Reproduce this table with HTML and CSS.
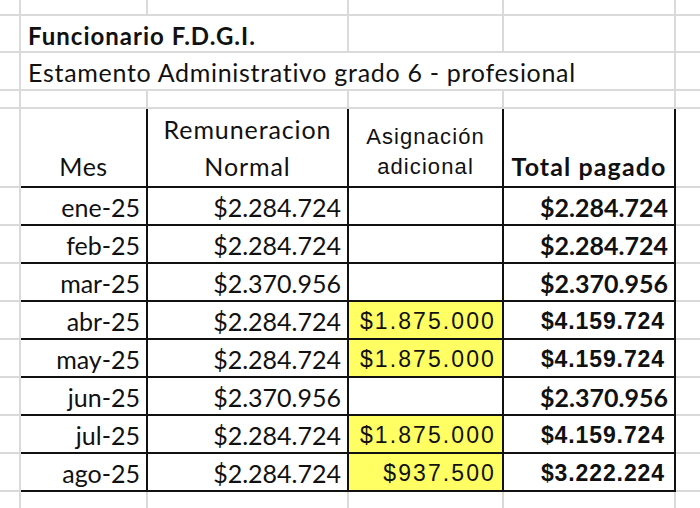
FILE: index.html
```html
<!DOCTYPE html>
<html lang="es">
<head>
<meta charset="utf-8">
<title>Funcionario F.D.G.I.</title>
<link rel="stylesheet" href="styles.css">
</head>
<body>
<table class="sheet">
  <colgroup>
    <col class="c0"><col class="c1"><col class="c2"><col class="c3"><col class="c4"><col class="c5">
  </colgroup>
  <tr class="r-top"><td></td><td></td><td></td><td></td><td></td><td></td></tr>
  <tr class="r-title"><td></td><td colspan="2" class="title">Funcionario F.D.G.I.</td><td></td><td></td><td></td></tr>
  <tr class="r-sub"><td></td><td colspan="4" class="subtitle">Estamento Administrativo grado 6 - profesional</td><td></td></tr>
  <tr class="r-gap"><td></td><td></td><td></td><td></td><td></td><td></td></tr>
  <tr class="r-head">
    <td></td>
    <td class="b hc cal">Mes</td>
    <td class="b hc cal rem">Remuneracion<br>Normal</td>
    <td class="b hc ari">Asignación<br>adicional</td>
    <td class="b hc cal bold">Total pagado</td>
    <td></td>
  </tr>
  <tr class="r-data"><td></td><td class="b m">ene-25</td><td class="b n">$2.284.724</td><td class="b a"></td><td class="b t">$2.284.724</td><td></td></tr>
  <tr class="r-data"><td></td><td class="b m">feb-25</td><td class="b n">$2.284.724</td><td class="b a"></td><td class="b t">$2.284.724</td><td></td></tr>
  <tr class="r-data"><td></td><td class="b m">mar-25</td><td class="b n">$2.370.956</td><td class="b a"></td><td class="b t">$2.370.956</td><td></td></tr>
  <tr class="r-data"><td></td><td class="b m">abr-25</td><td class="b n">$2.284.724</td><td class="b a hl">$1.875.000</td><td class="b t ta">$4.159.724</td><td></td></tr>
  <tr class="r-data"><td></td><td class="b m">may-25</td><td class="b n">$2.284.724</td><td class="b a hl">$1.875.000</td><td class="b t ta">$4.159.724</td><td></td></tr>
  <tr class="r-data"><td></td><td class="b m">jun-25</td><td class="b n">$2.370.956</td><td class="b a"></td><td class="b t">$2.370.956</td><td></td></tr>
  <tr class="r-data"><td></td><td class="b m">jul-25</td><td class="b n">$2.284.724</td><td class="b a hl">$1.875.000</td><td class="b t ta">$4.159.724</td><td></td></tr>
  <tr class="r-data"><td></td><td class="b m">ago-25</td><td class="b n">$2.284.724</td><td class="b a hl">$937.500</td><td class="b t ta">$3.222.224</td><td></td></tr>
  <tr class="r-bottom"><td></td><td></td><td></td><td></td><td></td><td></td></tr>
</table>
</body>
</html>
```
FILE: styles.css
```css
html, body {
  margin: 0;
  padding: 0;
  background: #ffffff;
  width: 700px;
  height: 508px;
  overflow: hidden;
}

.sheet {
  border-collapse: collapse;
  table-layout: fixed;
  width: 700px;
  color: #111111;
  font-family: Lato, "Liberation Sans", sans-serif;
  font-size: 25px;
}

.c0 { width: 20px; }
.c1 { width: 127px; }
.c2 { width: 201px; }
.c3 { width: 155px; }
.c4 { width: 172px; }
.c5 { width: 25px; }

.sheet td {
  border: 2px solid #dadada;
  padding: 0;
  white-space: nowrap;
  overflow: visible;
  vertical-align: middle;
  line-height: 1;
}

.r-top { height: 15px; }
.r-title { height: 37px; }
.r-sub { height: 38px; }
.r-gap { height: 18px; }
.r-head { height: 79px; }
.r-data { height: 38px; }
.r-bottom { height: 17px; }

.r-top td { border-top: none; }
.r-bottom td { border-bottom: none; }
.sheet td:first-child { border-left: none; }
.sheet td:last-child { border-right: none; }

.title {
  font-weight: 700;
  font-size: 24px;
  letter-spacing: 1px;
  padding: 4px 0 0 7px !important;
}

.subtitle {
  font-size: 25px;
  letter-spacing: 0.7px;
  padding: 3px 0 0 7px !important;
}

.sheet td.b {
  border: 2px solid #111111;
}

.sheet td.hc {
  text-align: center;
  vertical-align: bottom;
}

.sheet td.cal {
  font-family: Lato, sans-serif;
  font-size: 25px;
  line-height: 37px;
  letter-spacing: 0.5px;
  padding-bottom: 1px;
}

.sheet td.rem { letter-spacing: 0.9px; }

.sheet td.ari {
  font-family: "Liberation Sans", Arial, sans-serif;
  font-size: 22px;
  line-height: 30px;
  letter-spacing: 1.1px;
  padding-bottom: 4px;
}

.sheet td.bold { font-weight: 700; letter-spacing: 1.1px; }

.sheet td.m {
  text-align: right;
  padding: 3px 6px 0 0;
}

.sheet td.n {
  text-align: right;
  padding: 3px 6px 0 0;
  font-family: Lato, sans-serif;
  font-size: 25px;
}

.sheet td.a {
  text-align: right;
  padding: 3px 6px 0 0;
  font-family: "Liberation Sans", Arial, sans-serif;
  font-size: 23px;
  letter-spacing: 2.1px;
}

.sheet td.hl { background: #ffff63; }

.sheet td.t {
  text-align: right;
  padding: 3px 6px 0 0;
  font-family: Lato, sans-serif;
  font-weight: 700;
  font-size: 25px;
}

.sheet td.ta {
  font-family: "Liberation Sans", Arial, sans-serif;
  font-size: 23px;
  letter-spacing: 0.9px;
  padding-right: 9px;
}
```
